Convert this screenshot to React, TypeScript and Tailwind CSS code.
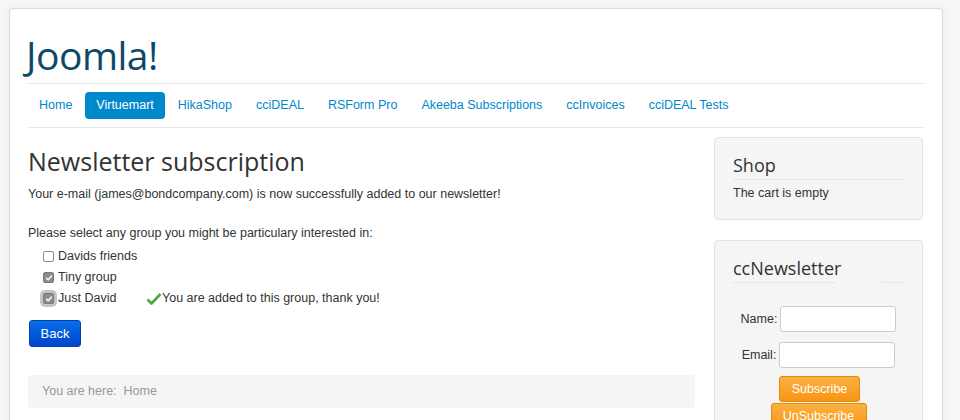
import React from "react";

const navItems = [
  "Home",
  "Virtuemart",
  "HikaShop",
  "cciDEAL",
  "RSForm Pro",
  "Akeeba Subscriptions",
  "ccInvoices",
  "cciDEAL Tests",
];

const groups = [
  { name: "Davids friends", checked: false },
  { name: "Tiny group", checked: true },
  { name: "Just David", checked: true, focus: true, note: "You are added to this group, thank you!" },
];

function Box({ checked, focus }: { checked: boolean; focus?: boolean }) {
  return (
    <span
      className={
        "inline-flex items-center justify-center w-[11px] h-[11px] rounded-[2px] mt-[4px] mr-[4px] shrink-0 " +
        (checked ? "bg-[#8c8c8c] border border-[#7a7a7a]" : "bg-white border border-[#8a8a8a]") +
        (focus ? " ring-[3px] ring-[#c4c4c4]" : "")
      }
    >
      {checked && (
        <svg width="8" height="8" viewBox="0 0 8 8">
          <path d="M1.5 4.2 L3.2 5.8 L6.5 2" stroke="white" strokeWidth="1.4" fill="none" strokeLinecap="round" />
        </svg>
      )}
    </span>
  );
}

export default function App() {
  return (
    <div className="bg-[#f4f6f7] pt-[8px] pl-[9px] pr-[17px] overflow-hidden h-[420px] font-['Liberation_Sans',Arial,sans-serif] text-[12.5px] text-[#333]">
      <div className="bg-white border border-[#dcdcdc] rounded-[4px] shadow-[0_0_6px_rgba(0,0,0,0.06)] px-[18px] pt-[18px] pb-[40px]">
        <h1 className="font-['Open_Sans',sans-serif] text-[39px] leading-[56px] text-[#0c4868] ml-[-2px] tracking-[-0.5px]">
          Joomla!
        </h1>
        <div className="border-t border-[#e8e8e8]" />
        <nav className="flex items-center py-[8px]">
          {navItems.map((n, i) => (
            <a
              key={n}
              className={
                "px-[11px] h-[27px] flex items-center rounded-[4px] mr-[2px] " +
                (i === 1 ? "bg-[#0088cc] text-white" : "text-[#0088cc]")
              }
            >
              {n}
            </a>
          ))}
        </nav>
        <div className="border-t border-[#e8e8e8]" />

        <div className="flex pt-[9px]">
          <main className="w-[667px]">
            <h2 className="font-['Open_Sans',sans-serif] text-[25px] leading-[34px] text-[#333] mt-[7px]">
              Newsletter subscription
            </h2>
            <p className="mt-[7px] leading-[18px]">
              Your e-mail (james@bondcompany.com) is now successfully added to our newsletter!
            </p>
            <p className="mt-[21px] leading-[18px]">Please select any group you might be particulary interested in:</p>
            <div className="mt-[5px] pl-[15px]">
              {groups.map((g) => (
                <div key={g.name} className="flex h-[21px] items-start">
                  <Box checked={g.checked} focus={g.focus} />
                  <span className="w-[88px] leading-[18px]">{g.name}</span>
                  {g.note && (
                    <span className="flex items-start leading-[18px]">
                      <svg width="16" height="14" viewBox="0 0 16 14" className="mt-[3px]">
                        <path d="M1.5 7.5 L5.5 11.5 L14.5 2" stroke="#4caa3c" strokeWidth="2.6" fill="none" strokeLinejoin="round" />
                      </svg>
                      {g.note}
                    </span>
                  )}
                </div>
              ))}
            </div>
            <button className="mt-[10px] h-[27px] w-[52px] rounded-[3px] border border-[#0044aa] bg-gradient-to-b from-[#0a6ce8] to-[#0047cc] text-white text-[13px] ml-[1px]">
              Back
            </button>
            <div className="mt-[28px] h-[33px] bg-[#f5f5f5] rounded-[4px] flex items-center pl-[14px] text-[#999]">
              You are here:&nbsp; Home
            </div>
          </main>

          <aside className="ml-[19px] w-[209px]">
            <div className="bg-[#f5f5f5] border border-[#e3e3e3] rounded-[4px] px-[18px] pt-[14px] pb-[17px]">
              <h3 className="font-['Open_Sans',sans-serif] text-[18px] leading-[26px] text-[#333] border-b border-[#e6e6e6] pb-[1px]">
                Shop
              </h3>
              <p className="mt-[4px] leading-[18px]">The cart is empty</p>
            </div>

            <div className="mt-[20px] bg-[#f5f5f5] border border-[#e3e3e3] rounded-[4px] px-[18px] pt-[14px] pb-[18px]">
              <h3 className="font-['Open_Sans',sans-serif] text-[18px] leading-[26px] text-[#333]">ccNewsletter</h3>
              <div className="flex mt-[1px]">
                <div className="border-t border-[#e6e6e6] w-[103px]" />
                <div className="border-t border-[#e6e6e6] w-[22px] ml-[46px]" />
              </div>
              <div className="mt-[23px] flex flex-col items-center">
                <div className="flex items-center">
                  <label className="mr-[3px]">Name:</label>
                  <input className="w-[116px] h-[26px] bg-white border border-[#cccccc] rounded-[3px]" />
                </div>
                <div className="flex items-center mt-[10px]">
                  <label className="mr-[3px]">Email:</label>
                  <input className="w-[116px] h-[26px] bg-white border border-[#cccccc] rounded-[3px]" />
                </div>
                <button className="mt-[8px] w-[81px] h-[26px] rounded-[3px] border border-[#e08a10] bg-gradient-to-b from-[#fbb040] to-[#f7950f] text-white ml-[2px]">
                  Subscribe
                </button>
                <button className="mt-[1px] w-[96px] h-[26px] rounded-[3px] border border-[#e08a10] bg-gradient-to-b from-[#fbb040] to-[#f7950f] text-white">
                  UnSubscribe
                </button>
              </div>
            </div>
          </aside>
        </div>
      </div>
    </div>
  );
}
